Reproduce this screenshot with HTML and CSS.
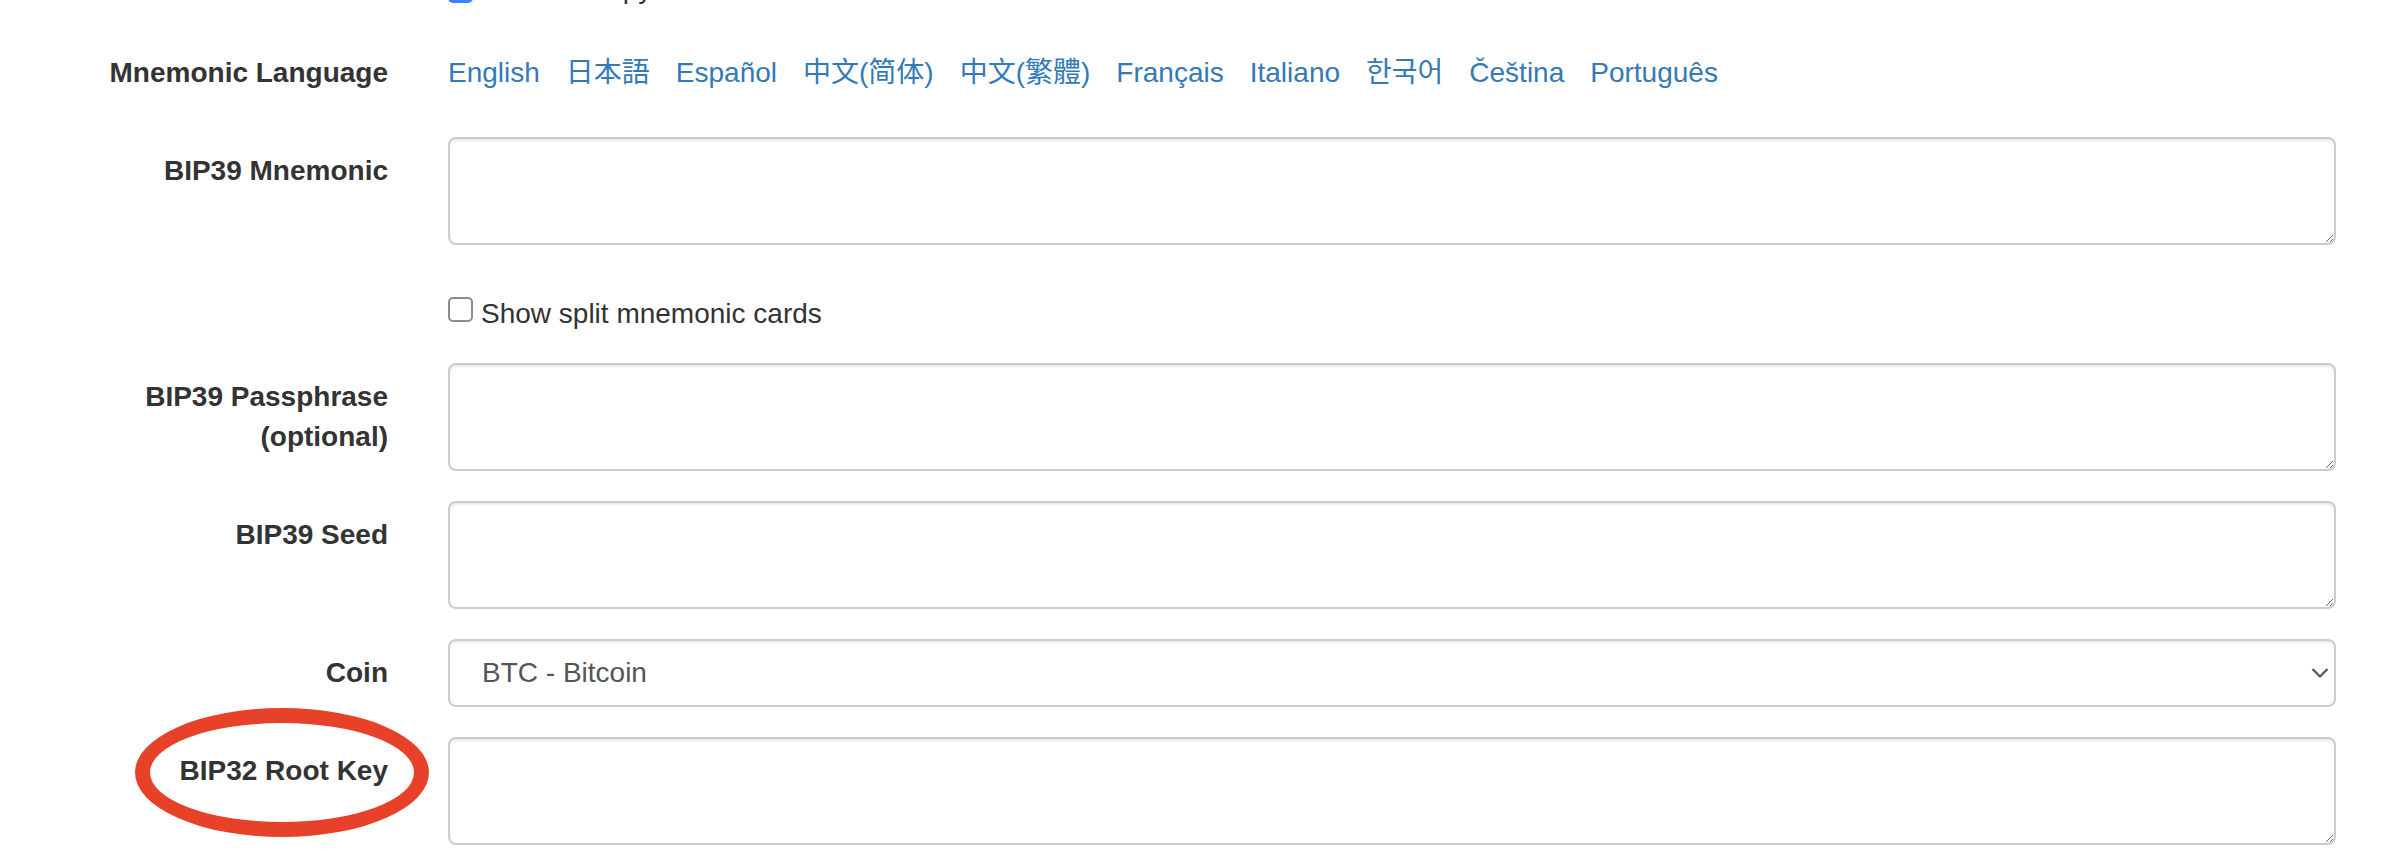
FILE: index.html
```html
<!DOCTYPE html>
<html lang="en">
<head>
<meta charset="utf-8">
<title>BIP39</title>
<link rel="stylesheet" href="styles.css">
</head>
<body>
<form class="form">
  <div class="group group-top">
    <div class="label-col"></div>
    <div class="control-col">
      <label class="check-line"><input type="checkbox" class="cb cb-checked" checked>Show entropy details</label>
    </div>
  </div>

  <div class="group group-lang">
    <label class="label-col">Mnemonic Language</label>
    <div class="control-col">
      <div class="languages">
        <a href="#english">English</a>
        <a href="#japanese" class="ja" lang="ja">日本語</a>
        <a href="#spanish">Español</a>
        <a href="#chinese_simplified" class="sc" lang="zh-Hans">中文(简体)</a>
        <a href="#chinese_traditional" class="tc" lang="zh-Hant">中文(繁體)</a>
        <a href="#french">Français</a>
        <a href="#italian">Italiano</a>
        <a href="#korean" class="kr" lang="ko">한국어</a>
        <a href="#czech">Čeština</a>
        <a href="#portuguese">Português</a>
      </div>
    </div>
  </div>

  <div class="group">
    <label class="label-col">BIP39 Mnemonic</label>
    <div class="control-col"><textarea class="field"></textarea></div>
  </div>

  <div class="group group-split">
    <div class="label-col"></div>
    <div class="control-col">
      <label class="check-line"><input type="checkbox" class="cb">Show split mnemonic cards</label>
    </div>
  </div>

  <div class="group">
    <label class="label-col">BIP39 Passphrase<br>(optional)</label>
    <div class="control-col"><textarea class="field"></textarea></div>
  </div>

  <div class="group">
    <label class="label-col">BIP39 Seed</label>
    <div class="control-col"><textarea class="field"></textarea></div>
  </div>

  <div class="group">
    <label class="label-col">Coin</label>
    <div class="control-col">
      <div class="select-wrap">
        <select class="select">
          <option>BTC - Bitcoin</option>
        </select>
        <svg class="chevron" width="18" height="12" viewBox="0 0 18 12"><path d="M1.5 2 L9 9.5 L16.5 2" fill="none" stroke="#555" stroke-width="2.2"/></svg>
      </div>
    </div>
  </div>

  <div class="group">
    <label class="label-col label-marked">BIP32 Root Key<span class="ring"></span></label>
    <div class="control-col"><textarea class="field"></textarea></div>
  </div>
</form>
</body>
</html>
```

FILE: styles.css
```css
html, body {
  margin: 0;
  padding: 0;
  background: #ffffff;
}

body {
  font-family: "Liberation Sans", Arial, "Noto Sans CJK SC", sans-serif;
  font-size: 28px;
  line-height: 40px;
  color: #333333;
  overflow: hidden;
}

.form {
  margin-top: -45px;
}

.group {
  display: grid;
  grid-template-columns: 418px 1fr;
  margin-bottom: 30px;
}

.group-top {
  margin-bottom: 30px;
}

.label-col {
  box-sizing: border-box;
  padding: 14px 30px 0 0;
  text-align: right;
  font-weight: bold;
  position: relative;
}

.control-col {
  box-sizing: border-box;
  padding: 0 52px 0 30px;
  min-width: 0;
}

.group-top .control-col {
  padding-top: 14px;
}

.group-split {
  margin-bottom: 29px;
}

.group-split .control-col {
  padding-top: 19px;
}

.check-line {
  display: block;
  font-weight: normal;
  white-space: nowrap;
}

.cb {
  -webkit-appearance: none;
  appearance: none;
  box-sizing: border-box;
  width: 25px;
  height: 25px;
  margin: 0 8px 0 0;
  border: 2px solid #8c8c8c;
  border-radius: 5px;
  background: #fff;
  vertical-align: 1px;
}

.cb-checked {
  background: #3a82f7;
  border-color: #3a82f7;
  vertical-align: -5px;
}

.languages {
  display: flex;
  flex-wrap: wrap;
  column-gap: 26px;
  padding: 14px 0;
}

.languages a {
  color: #337ab7;
  text-decoration: none;
}

.languages .ja { font-family: "Liberation Sans", "Noto Sans CJK JP", sans-serif; }
.languages .sc { font-family: "Liberation Sans", "Noto Sans CJK SC", sans-serif; }
.languages .tc { font-family: "Liberation Sans", "Noto Sans CJK TC", sans-serif; }
.languages .kr { font-family: "Liberation Sans", "Noto Sans CJK KR", sans-serif; }

.field {
  display: block;
  box-sizing: border-box;
  width: 100%;
  height: 108px;
  margin: 0;
  padding: 12px 24px;
  border: 2px solid #cccccc;
  border-radius: 8px;
  box-shadow: inset 0 2px 2px rgba(0, 0, 0, 0.075);
  font-family: inherit;
  font-size: 28px;
  line-height: 40px;
  color: #555555;
  background: #ffffff;
  resize: vertical;
}

.select-wrap {
  position: relative;
}

.select {
  display: block;
  box-sizing: border-box;
  width: 100%;
  height: 68px;
  margin: 0;
  padding: 0 60px 0 32px;
  border: 2px solid #cccccc;
  border-radius: 8px;
  box-shadow: inset 0 2px 2px rgba(0, 0, 0, 0.075);
  -webkit-appearance: none;
  appearance: none;
  background: #ffffff;
  font-family: inherit;
  font-size: 28px;
  line-height: 40px;
  color: #555555;
}

.chevron {
  position: absolute;
  right: 7px;
  top: 28px;
  pointer-events: none;
}

.ring {
  position: absolute;
  left: 135px;
  top: -29px;
  width: 294px;
  height: 129px;
  box-sizing: border-box;
  border: 15px solid #e8412a;
  border-radius: 50%;
  pointer-events: none;
}
```
